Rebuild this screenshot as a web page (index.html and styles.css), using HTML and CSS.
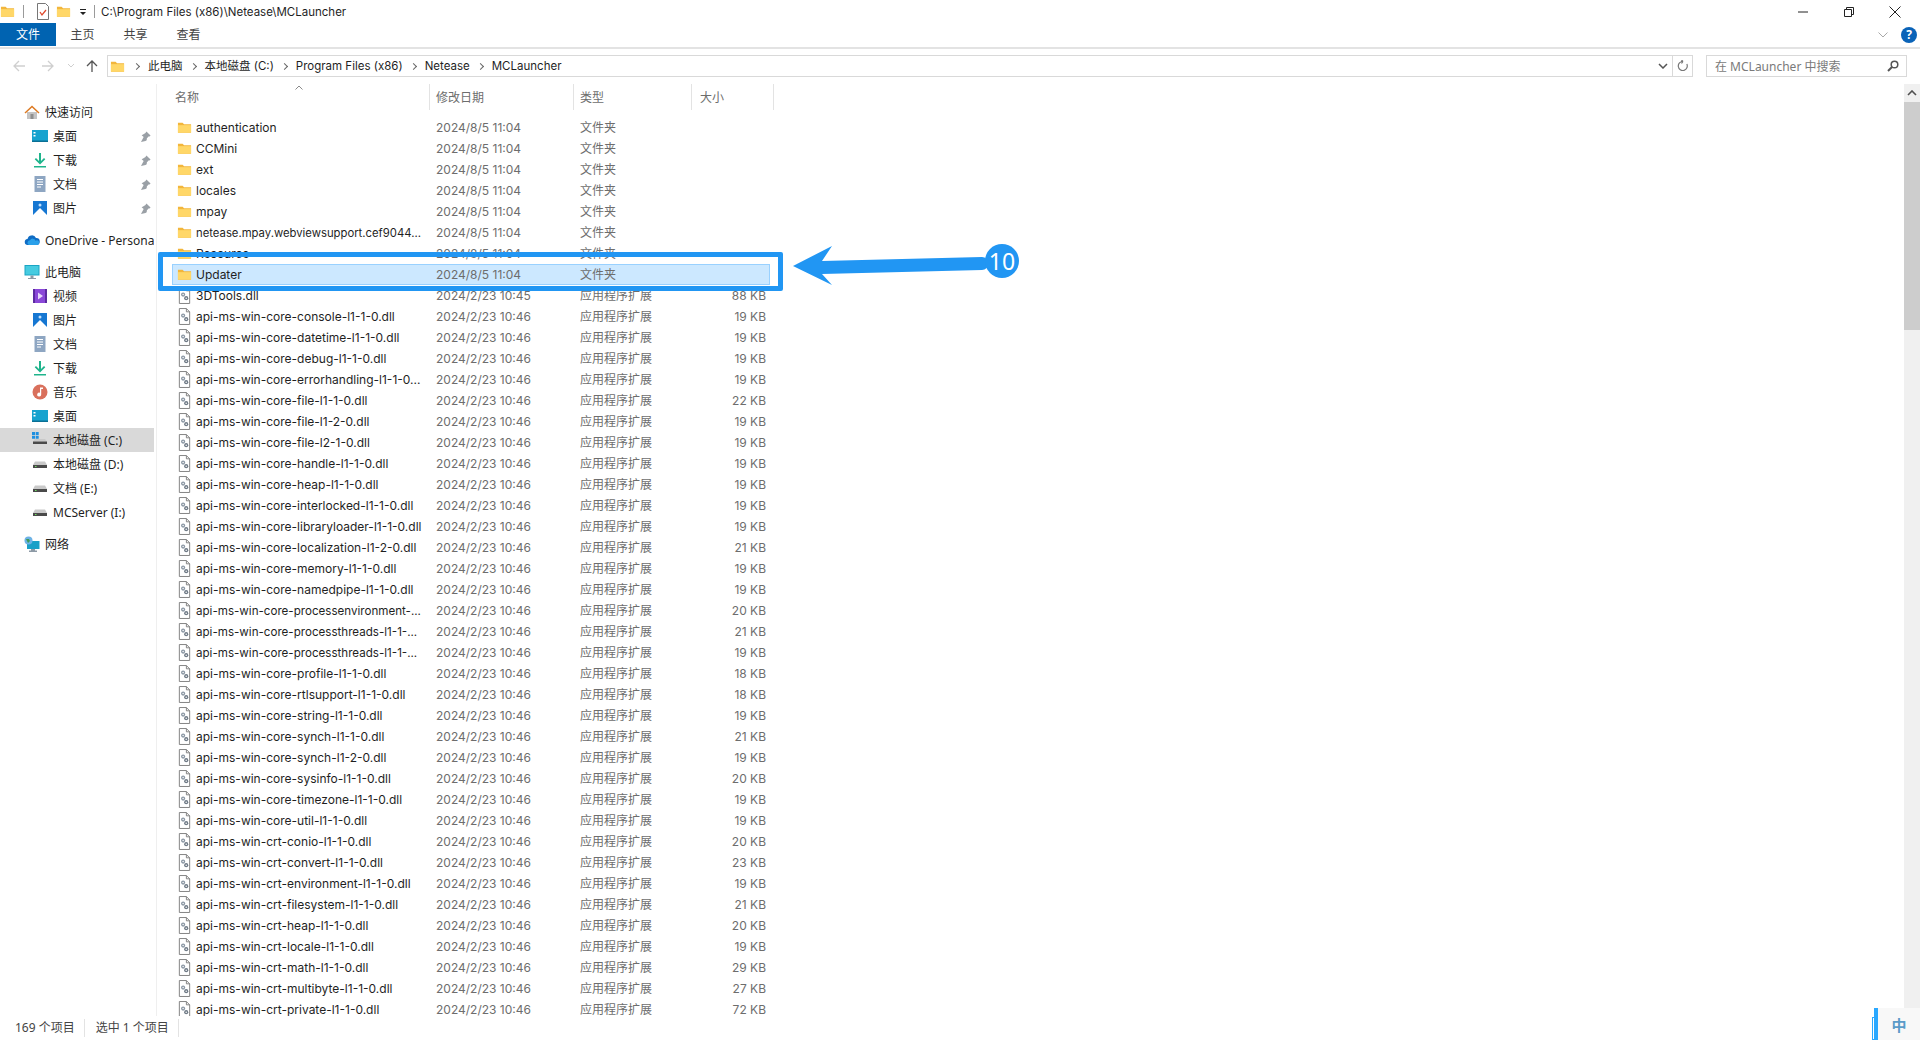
FILE: index.html
```html
<!DOCTYPE html>
<html lang="zh-CN">
<head>
    <meta charset="UTF-8">
    <title>MCLauncher</title>
    <link rel="stylesheet" href="styles.css">
</head>
<body>
    <!-- shared icons -->
    <svg class="defs" width="0" height="0">
        <symbol id="folder" viewBox="0 0 16 16"><path d="M1 3h5l1.500 1.500H15v9H1z" fill="#f2b63c"/><path d="M1 5.500h14v8H1z" fill="#ffd768"/></symbol>
        <symbol id="dll" viewBox="0 0 16 18"><path d="M2.500.5h7.500l3.500 3.500v13.500h-11z" fill="#fff" stroke="#7d7d7d"/><path d="M10 .5v3.500h3.500" fill="none" stroke="#7d7d7d"/><circle cx="6.500" cy="8" r="2.200" fill="#8a96a3"/><circle cx="6.500" cy="8" r=".8" fill="#fff"/><circle cx="9.800" cy="11.800" r="2.200" fill="#6f7a86"/><circle cx="9.800" cy="11.800" r=".8" fill="#fff"/></symbol>
        <symbol id="home" viewBox="0 0 16 16"><path d="M3 8h10v7H3z" fill="#c4c4c4"/><path d="M6.500 10h3v5h-3z" fill="#8f8f8f"/><path d="M.5 8.500 8 1.500l7.500 7-1 1L8 3.500l-6.500 6z" fill="#dd7a22"/></symbol>
        <symbol id="desktop" viewBox="0 0 16 16"><path d="M0 2h16v12H0z" fill="#17a3cf"/><path d="M0 12.500h16V14H0z" fill="#0b6f94"/><path d="M1.500 4h2v1.500h-2zm0 3h2v1.500h-2z" fill="#fff"/></symbol>
        <symbol id="download" viewBox="0 0 16 16"><path d="M7 1h2v8l3-3 1.300 1.300L8 12.500 2.700 7.300 4 6l3 3z" fill="#1fb48c"/><path d="M2 14h12v1.500H2z" fill="#1fb48c"/></symbol>
        <symbol id="doc" viewBox="0 0 16 16"><path d="M2.500 0h11v16h-11z" fill="#8ea6c2"/><path d="M5 3h6v1H5zm0 2.500h6v1H5zm0 2.500h6v1H5zm0 2.500h4v1H5z" fill="#fff"/></symbol>
        <symbol id="pics" viewBox="0 0 16 16"><path d="M1 1h14v14H1z" fill="#1677d2"/><path d="M1 15l7-7 7 7z" fill="#fff"/><circle cx="8" cy="5" r="1.500" fill="#bfe0ff"/></symbol>
        <symbol id="cloud" viewBox="0 0 16 16"><path d="M4 13a3 3 0 0 1-.5-6 4.500 4.500 0 0 1 8.500-1 3.500 3.500 0 0 1 .5 7z" fill="#0f6cc4"/><path d="M5 13a2.500 2.500 0 0 1 1-4.800 3 3 0 0 1 5.500.5 2.200 2.200 0 0 1 3.500 2.300c0 1-.7 2-2 2z" fill="#2aa0ea"/></symbol>
        <symbol id="pc" viewBox="0 0 16 16"><path d="M.5 1h15v10.500H.5z" fill="#1aa5c4"/><path d="M1.500 2h13v8.500h-13z" fill="#46cbe0"/><path d="M6.500 11.500h3V14h-3zM4 14h8v1H4z" fill="#8d9aa6"/></symbol>
        <symbol id="video" viewBox="0 0 16 16"><path d="M1 1h14v14H1z" fill="#8a48d8"/><path d="M1 1h2v14H1zm12 0h2v14h-2z" fill="#5b2aa0"/><path d="M6 4.500 11 8l-5 3.500z" fill="#e6d8fa"/></symbol>
        <symbol id="music" viewBox="0 0 16 16"><circle cx="8" cy="8" r="7.500" fill="#d9705c"/><path d="M8 3.500h3v1.500H9.200v5.500a2 2 0 1 1-1.200-1.800z" fill="#fff"/></symbol>
        <symbol id="drive" viewBox="0 0 16 16"><path d="M3 5.500h10L15 9H1z" fill="#c9c9c9"/><path d="M1 9h14v3H1z" fill="#4a4a4a"/><path d="M3 10h1.500v1H3z" fill="#6fe05f"/></symbol>
        <symbol id="drive-c" viewBox="0 0 16 16"><path d="M3 7h10l2 2.500H1z" fill="#c9c9c9"/><path d="M1 9.500h14V12H1z" fill="#4a4a4a"/><path d="M0 0h3v3H0zm3.700 0h3v3h-3zM0 3.700h3v3H0zm3.700 0h3v3h-3z" fill="#1e8fe0"/></symbol>
        <symbol id="network" viewBox="0 0 16 16"><path d="M3 5h12.500v8H3z" fill="#1aa0c8"/><path d="M7 13h4v1.500h2V16H5v-1.500h2z" fill="#8d9aa6"/><circle cx="4.500" cy="4.500" r="4" fill="#6db2e6"/><path d="M2 3h3l1 2-2 2z" fill="#3f9a57"/></symbol>
        <symbol id="pin" viewBox="0 0 12 12"><path d="M7 .5l4.500 4.500-1 1-.8-.3L7.500 8l-.2 2-1.300.8L1 12l.5-.8L4 6.500 1.800 4.700 3.800 3.500 6 2.300l.3-.8z" fill="#9aa0a6"/></symbol>
    </svg>

    <div class="titlebar">
        <svg class="qa-folder"><use href="#folder"/></svg>
        <span class="qa-sep"></span>
        <svg class="qa-props" viewBox="0 0 12 17"><path d="M.5.5h8l3 3v13H.5z" fill="#fff" stroke="#777"/><path d="M3 9l2 3 4-5" fill="none" stroke="#e0492c" stroke-width="1.300"/></svg>
        <svg class="qa-folder"><use href="#folder"/></svg>
        <svg class="qa-down" viewBox="0 0 8 8"><path d="M1 1h6v1H1zM1 4h6L4 7z" fill="#222"/></svg>
        <span class="qa-sep"></span>
        <span class="title-text">C:\Program Files (x86)\Netease\MCLauncher</span>
        <div class="win-buttons">
            <svg viewBox="0 0 12 12"><path d="M1 6h10" stroke="#222"/></svg>
            <svg viewBox="0 0 12 12"><path d="M1.500 3.500h7v7h-7zM3.500 3.500v-2h7v7h-2" fill="none" stroke="#222"/></svg>
            <svg viewBox="0 0 12 12"><path d="M.5.500l11 11M11.500.500l-11 11" stroke="#222"/></svg>
        </div>
    </div>

    <div class="ribbon">
        <span class="tab tab-file">文件</span>
        <span class="tab">主页</span>
        <span class="tab">共享</span>
        <span class="tab">查看</span>
        <svg class="ribbon-chevron" viewBox="0 0 10 6"><path d="M.5.500 5 5 9.500.500" fill="none" stroke="#a8a8a8"/></svg>
        <span class="help">?</span>
    </div>

    <div class="addressbar">
        <div class="nav-buttons">
            <svg viewBox="0 0 14 14"><path d="M13 7H2M7 2 2 7l5 5" fill="none" stroke="#cfcfcf" stroke-width="1.300"/></svg>
            <svg viewBox="0 0 14 14"><path d="M1 7h11M7 2l5 5-5 5" fill="none" stroke="#cfcfcf" stroke-width="1.300"/></svg>
            <svg class="nav-small" viewBox="0 0 8 6"><path d="M1 1l3 3 3-3" fill="none" stroke="#cfcfcf"/></svg>
            <svg viewBox="0 0 14 14"><path d="M7 13V2M2 7l5-5 5 5" fill="none" stroke="#555" stroke-width="1.300"/></svg>
        </div>
        <div class="path-box">
            <svg class="path-folder"><use href="#folder"/></svg>
            <span class="crumb-sep"></span><span class="crumb">此电脑</span>
            <span class="crumb-sep"></span><span class="crumb">本地磁盘 (C:)</span>
            <span class="crumb-sep"></span><span class="crumb">Program Files (x86)</span>
            <span class="crumb-sep"></span><span class="crumb">Netease</span>
            <span class="crumb-sep"></span><span class="crumb">MCLauncher</span>
            <svg class="path-drop" viewBox="0 0 10 6"><path d="M1 1l4 4 4-4" fill="none" stroke="#555" stroke-width="1.500"/></svg>
            <span class="path-refresh"><svg viewBox="0 0 12 12"><path d="M9.800 4A4.500 4.500 0 1 1 6 1.500H4M6 1.500 4.500 0M6 1.500 4.500 3.500" fill="none" stroke="#777" stroke-width="1.200"/></svg></span>
        </div>
        <div class="search-box">
            <span>在 MCLauncher 中搜索</span>
            <svg viewBox="0 0 12 12"><circle cx="7.500" cy="4.500" r="3.300" fill="none" stroke="#555" stroke-width="1.500"/><path d="M5 7 1 11" stroke="#555" stroke-width="2"/></svg>
        </div>
    </div>

    <div class="main">
        <nav class="sidebar">
            <div class="nav-group">
                <div class="nav-item top"><svg><use href="#home"/></svg>快速访问</div>
                <div class="nav-item"><svg><use href="#desktop"/></svg>桌面<svg class="pin"><use href="#pin"/></svg></div>
                <div class="nav-item"><svg><use href="#download"/></svg>下载<svg class="pin"><use href="#pin"/></svg></div>
                <div class="nav-item"><svg><use href="#doc"/></svg>文档<svg class="pin"><use href="#pin"/></svg></div>
                <div class="nav-item"><svg><use href="#pics"/></svg>图片<svg class="pin"><use href="#pin"/></svg></div>
            </div>
            <div class="nav-group">
                <div class="nav-item top"><svg><use href="#cloud"/></svg>OneDrive - Personal</div>
            </div>
            <div class="nav-group">
                <div class="nav-item top"><svg><use href="#pc"/></svg>此电脑</div>
                <div class="nav-item"><svg><use href="#video"/></svg>视频</div>
                <div class="nav-item"><svg><use href="#pics"/></svg>图片</div>
                <div class="nav-item"><svg><use href="#doc"/></svg>文档</div>
                <div class="nav-item"><svg><use href="#download"/></svg>下载</div>
                <div class="nav-item"><svg><use href="#music"/></svg>音乐</div>
                <div class="nav-item"><svg><use href="#desktop"/></svg>桌面</div>
                <div class="nav-item active"><svg><use href="#drive-c"/></svg>本地磁盘 (C:)</div>
                <div class="nav-item"><svg><use href="#drive"/></svg>本地磁盘 (D:)</div>
                <div class="nav-item"><svg><use href="#drive"/></svg>文档 (E:)</div>
                <div class="nav-item"><svg><use href="#drive"/></svg>MCServer (I:)</div>
            </div>
            <div class="nav-group">
                <div class="nav-item top"><svg><use href="#network"/></svg>网络</div>
            </div>
        </nav>

        <section class="files">
            <div class="list-head">
                <span class="col-name">名称<svg class="sort" viewBox="0 0 8 5"><path d="M.5 4.500 4 1l3.500 3.500" fill="none" stroke="#8a8a8a"/></svg></span>
                <span class="col-date">修改日期</span>
                <span class="col-type">类型</span>
                <span class="col-size">大小</span>
            </div>
            <div class="list-body">
                <div class="row"><svg><use href="#folder"/></svg><span class="name">authentication</span><span class="date">2024/8/5 11:04</span><span class="type">文件夹</span><span class="size"></span></div>
                <div class="row"><svg><use href="#folder"/></svg><span class="name">CCMini</span><span class="date">2024/8/5 11:04</span><span class="type">文件夹</span><span class="size"></span></div>
                <div class="row"><svg><use href="#folder"/></svg><span class="name">ext</span><span class="date">2024/8/5 11:04</span><span class="type">文件夹</span><span class="size"></span></div>
                <div class="row"><svg><use href="#folder"/></svg><span class="name">locales</span><span class="date">2024/8/5 11:04</span><span class="type">文件夹</span><span class="size"></span></div>
                <div class="row"><svg><use href="#folder"/></svg><span class="name">mpay</span><span class="date">2024/8/5 11:04</span><span class="type">文件夹</span><span class="size"></span></div>
                <div class="row"><svg><use href="#folder"/></svg><span class="name narrow">netease.mpay.webviewsupport.cef9044...</span><span class="date">2024/8/5 11:04</span><span class="type">文件夹</span><span class="size"></span></div>
                <div class="row"><svg><use href="#folder"/></svg><span class="name">Resource</span><span class="date">2024/8/5 11:04</span><span class="type">文件夹</span><span class="size"></span></div>
                <div class="row selected"><svg><use href="#folder"/></svg><span class="name">Updater</span><span class="date">2024/8/5 11:04</span><span class="type">文件夹</span><span class="size"></span></div>
                <div class="row"><svg><use href="#dll"/></svg><span class="name">3DTools.dll</span><span class="date">2024/2/23 10:45</span><span class="type">应用程序扩展</span><span class="size">88 KB</span></div>
                <div class="row"><svg><use href="#dll"/></svg><span class="name">api-ms-win-core-console-l1-1-0.dll</span><span class="date">2024/2/23 10:46</span><span class="type">应用程序扩展</span><span class="size">19 KB</span></div>
                <div class="row"><svg><use href="#dll"/></svg><span class="name">api-ms-win-core-datetime-l1-1-0.dll</span><span class="date">2024/2/23 10:46</span><span class="type">应用程序扩展</span><span class="size">19 KB</span></div>
                <div class="row"><svg><use href="#dll"/></svg><span class="name">api-ms-win-core-debug-l1-1-0.dll</span><span class="date">2024/2/23 10:46</span><span class="type">应用程序扩展</span><span class="size">19 KB</span></div>
                <div class="row"><svg><use href="#dll"/></svg><span class="name">api-ms-win-core-errorhandling-l1-1-0...</span><span class="date">2024/2/23 10:46</span><span class="type">应用程序扩展</span><span class="size">19 KB</span></div>
                <div class="row"><svg><use href="#dll"/></svg><span class="name">api-ms-win-core-file-l1-1-0.dll</span><span class="date">2024/2/23 10:46</span><span class="type">应用程序扩展</span><span class="size">22 KB</span></div>
                <div class="row"><svg><use href="#dll"/></svg><span class="name">api-ms-win-core-file-l1-2-0.dll</span><span class="date">2024/2/23 10:46</span><span class="type">应用程序扩展</span><span class="size">19 KB</span></div>
                <div class="row"><svg><use href="#dll"/></svg><span class="name">api-ms-win-core-file-l2-1-0.dll</span><span class="date">2024/2/23 10:46</span><span class="type">应用程序扩展</span><span class="size">19 KB</span></div>
                <div class="row"><svg><use href="#dll"/></svg><span class="name">api-ms-win-core-handle-l1-1-0.dll</span><span class="date">2024/2/23 10:46</span><span class="type">应用程序扩展</span><span class="size">19 KB</span></div>
                <div class="row"><svg><use href="#dll"/></svg><span class="name">api-ms-win-core-heap-l1-1-0.dll</span><span class="date">2024/2/23 10:46</span><span class="type">应用程序扩展</span><span class="size">19 KB</span></div>
                <div class="row"><svg><use href="#dll"/></svg><span class="name">api-ms-win-core-interlocked-l1-1-0.dll</span><span class="date">2024/2/23 10:46</span><span class="type">应用程序扩展</span><span class="size">19 KB</span></div>
                <div class="row"><svg><use href="#dll"/></svg><span class="name">api-ms-win-core-libraryloader-l1-1-0.dll</span><span class="date">2024/2/23 10:46</span><span class="type">应用程序扩展</span><span class="size">19 KB</span></div>
                <div class="row"><svg><use href="#dll"/></svg><span class="name">api-ms-win-core-localization-l1-2-0.dll</span><span class="date">2024/2/23 10:46</span><span class="type">应用程序扩展</span><span class="size">21 KB</span></div>
                <div class="row"><svg><use href="#dll"/></svg><span class="name">api-ms-win-core-memory-l1-1-0.dll</span><span class="date">2024/2/23 10:46</span><span class="type">应用程序扩展</span><span class="size">19 KB</span></div>
                <div class="row"><svg><use href="#dll"/></svg><span class="name">api-ms-win-core-namedpipe-l1-1-0.dll</span><span class="date">2024/2/23 10:46</span><span class="type">应用程序扩展</span><span class="size">19 KB</span></div>
                <div class="row"><svg><use href="#dll"/></svg><span class="name less">api-ms-win-core-processenvironment-...</span><span class="date">2024/2/23 10:46</span><span class="type">应用程序扩展</span><span class="size">20 KB</span></div>
                <div class="row"><svg><use href="#dll"/></svg><span class="name less">api-ms-win-core-processthreads-l1-1-...</span><span class="date">2024/2/23 10:46</span><span class="type">应用程序扩展</span><span class="size">21 KB</span></div>
                <div class="row"><svg><use href="#dll"/></svg><span class="name less">api-ms-win-core-processthreads-l1-1-...</span><span class="date">2024/2/23 10:46</span><span class="type">应用程序扩展</span><span class="size">19 KB</span></div>
                <div class="row"><svg><use href="#dll"/></svg><span class="name">api-ms-win-core-profile-l1-1-0.dll</span><span class="date">2024/2/23 10:46</span><span class="type">应用程序扩展</span><span class="size">18 KB</span></div>
                <div class="row"><svg><use href="#dll"/></svg><span class="name">api-ms-win-core-rtlsupport-l1-1-0.dll</span><span class="date">2024/2/23 10:46</span><span class="type">应用程序扩展</span><span class="size">18 KB</span></div>
                <div class="row"><svg><use href="#dll"/></svg><span class="name">api-ms-win-core-string-l1-1-0.dll</span><span class="date">2024/2/23 10:46</span><span class="type">应用程序扩展</span><span class="size">19 KB</span></div>
                <div class="row"><svg><use href="#dll"/></svg><span class="name">api-ms-win-core-synch-l1-1-0.dll</span><span class="date">2024/2/23 10:46</span><span class="type">应用程序扩展</span><span class="size">21 KB</span></div>
                <div class="row"><svg><use href="#dll"/></svg><span class="name">api-ms-win-core-synch-l1-2-0.dll</span><span class="date">2024/2/23 10:46</span><span class="type">应用程序扩展</span><span class="size">19 KB</span></div>
                <div class="row"><svg><use href="#dll"/></svg><span class="name">api-ms-win-core-sysinfo-l1-1-0.dll</span><span class="date">2024/2/23 10:46</span><span class="type">应用程序扩展</span><span class="size">20 KB</span></div>
                <div class="row"><svg><use href="#dll"/></svg><span class="name">api-ms-win-core-timezone-l1-1-0.dll</span><span class="date">2024/2/23 10:46</span><span class="type">应用程序扩展</span><span class="size">19 KB</span></div>
                <div class="row"><svg><use href="#dll"/></svg><span class="name">api-ms-win-core-util-l1-1-0.dll</span><span class="date">2024/2/23 10:46</span><span class="type">应用程序扩展</span><span class="size">19 KB</span></div>
                <div class="row"><svg><use href="#dll"/></svg><span class="name">api-ms-win-crt-conio-l1-1-0.dll</span><span class="date">2024/2/23 10:46</span><span class="type">应用程序扩展</span><span class="size">20 KB</span></div>
                <div class="row"><svg><use href="#dll"/></svg><span class="name">api-ms-win-crt-convert-l1-1-0.dll</span><span class="date">2024/2/23 10:46</span><span class="type">应用程序扩展</span><span class="size">23 KB</span></div>
                <div class="row"><svg><use href="#dll"/></svg><span class="name">api-ms-win-crt-environment-l1-1-0.dll</span><span class="date">2024/2/23 10:46</span><span class="type">应用程序扩展</span><span class="size">19 KB</span></div>
                <div class="row"><svg><use href="#dll"/></svg><span class="name">api-ms-win-crt-filesystem-l1-1-0.dll</span><span class="date">2024/2/23 10:46</span><span class="type">应用程序扩展</span><span class="size">21 KB</span></div>
                <div class="row"><svg><use href="#dll"/></svg><span class="name">api-ms-win-crt-heap-l1-1-0.dll</span><span class="date">2024/2/23 10:46</span><span class="type">应用程序扩展</span><span class="size">20 KB</span></div>
                <div class="row"><svg><use href="#dll"/></svg><span class="name">api-ms-win-crt-locale-l1-1-0.dll</span><span class="date">2024/2/23 10:46</span><span class="type">应用程序扩展</span><span class="size">19 KB</span></div>
                <div class="row"><svg><use href="#dll"/></svg><span class="name">api-ms-win-crt-math-l1-1-0.dll</span><span class="date">2024/2/23 10:46</span><span class="type">应用程序扩展</span><span class="size">29 KB</span></div>
                <div class="row"><svg><use href="#dll"/></svg><span class="name">api-ms-win-crt-multibyte-l1-1-0.dll</span><span class="date">2024/2/23 10:46</span><span class="type">应用程序扩展</span><span class="size">27 KB</span></div>
                <div class="row"><svg><use href="#dll"/></svg><span class="name">api-ms-win-crt-private-l1-1-0.dll</span><span class="date">2024/2/23 10:46</span><span class="type">应用程序扩展</span><span class="size">72 KB</span></div>
            </div>
        </section>

        <div class="scrollbar">
            <svg class="scroll-up" viewBox="0 0 10 6"><path d="M1 5l4-4 4 4" fill="none" stroke="#505050" stroke-width="1.600"/></svg>
            <div class="scroll-thumb"></div>
        </div>
    </div>

    <div class="statusbar">
        <span class="status-cell first">169 个项目</span>
        <span class="status-cell">选中 1 个项目</span>
    </div>

    <!-- things lying over the window -->
    <div class="mark-box"></div>
    <svg class="mark-arrow" viewBox="0 0 210 50"><path d="M1 23 40 3 30 18 190 14a6.500 6.500 0 0 1 0 13L30 31 40 42z" fill="#2196f3"/></svg>
    <div class="mark-badge">10</div>
    <div class="ime"><span>中</span></div>
</body>
</html>
```

FILE: styles.css
```css
:root {
    --text: #1f1f1f;
    --muted: #6d6d6d;
    --line: #e3e3e3;
    --mark: #2196f3;
}

* {
    box-sizing: border-box;
}

html, body {
    height: 100%;
}

body {
    margin: 0;
    height: 1040px;
    overflow: hidden;
    display: flex;
    flex-direction: column;
    background-color: #fff;
    color: var(--text);
    font-family: "Noto Sans", "Noto Sans CJK SC", sans-serif;
    font-size: 12px;
    position: relative;
}

.defs {
    position: absolute;
}

/* title bar */
.titlebar {
    height: 23px;
    display: flex;
    align-items: center;
    flex: none;
}

.qa-folder {
    width: 15px;
    height: 15px;
}

.qa-sep {
    width: 1px;
    height: 13px;
    background-color: #9a9a9a;
    margin: 0 9px 0 8px;
}

.qa-props {
    width: 12px;
    height: 17px;
    margin: 0 7px 0 4px;
}

.qa-down {
    width: 8px;
    height: 8px;
    margin: 1px 0 0 8px;
}

.titlebar .qa-sep:nth-of-type(n+2) {
    margin: 0 6px 0 7px;
}

.title-text {
    font-family: Inter, "Noto Sans CJK SC", sans-serif;
    font-size: 11.5px;
}

.win-buttons {
    margin-left: auto;
    margin-right: 19px;
    display: flex;
    gap: 34px;
}

.win-buttons svg {
    width: 12px;
    height: 12px;
}

/* ribbon */
.ribbon {
    height: 26px;
    flex: none;
    display: flex;
    align-items: flex-start;
    border-bottom: 2px solid var(--line);
}

.tab {
    width: 53px;
    height: 23px;
    line-height: 24px;
    text-align: center;
    color: #444;
}

.tab-file {
    width: 56px;
    background-color: #0063b1;
    color: #fff;
}

.ribbon-chevron {
    width: 10px;
    height: 6px;
    margin: 9px 0 0 auto;
}

.help {
    width: 16px;
    height: 16px;
    margin: 4px 3px 0 13px;
    border-radius: 50%;
    background-color: #0a63b8;
    color: #fff;
    font-weight: 700;
    line-height: 16px;
    text-align: center;
}

/* address bar */
.addressbar {
    height: 35px;
    flex: none;
    display: flex;
    align-items: center;
    padding: 0 13px 1px 0;
}

.nav-buttons {
    width: 107px;
    flex: none;
    display: flex;
    align-items: center;
    padding-left: 12px;
}

.nav-buttons svg {
    width: 14px;
    height: 14px;
    flex: none;
    margin-right: 15px;
}

.nav-buttons .nav-small {
    width: 8px;
    height: 6px;
    margin: 0 10px 0 -3px;
}

.path-box {
    width: 1586px;
    height: 22px;
    border: 1px solid #d9d9d9;
    display: flex;
    align-items: center;
    padding-left: 2px;
    font-family: Inter, "Noto Sans CJK SC", sans-serif;
    font-size: 11.5px;
}

.path-folder {
    width: 15px;
    height: 15px;
    margin-right: 1px;
}

.crumb-sep {
    width: 5px;
    height: 5px;
    border-top: 1px solid #666;
    border-right: 1px solid #666;
    transform: rotate(45deg);
    margin: 0 9px 0 8px;
}

.crumb {
    line-height: 20px;
}

.path-drop {
    width: 10px;
    height: 6px;
    margin-left: auto;
    margin-right: 4px;
}

.path-refresh {
    width: 20px;
    height: 20px;
    border-left: 1px solid #d9d9d9;
    display: flex;
    align-items: center;
    justify-content: center;
}

.path-refresh svg {
    width: 12px;
    height: 12px;
}

.search-box {
    width: 201px;
    height: 22px;
    margin-left: 13px;
    border: 1px solid #d9d9d9;
    display: flex;
    align-items: center;
    justify-content: space-between;
    padding: 0 7px 0 8px;
    color: #7a7a7a;
}

.search-box svg {
    width: 12px;
    height: 12px;
}

/* main area */
.main {
    flex: 1;
    min-height: 0;
    display: flex;
}

.sidebar {
    width: 157px;
    flex: none;
    padding-top: 16px;
    border-right: 1px solid #efefef;
    overflow: hidden;
}

.nav-group + .nav-group {
    margin-top: 8px;
}

.nav-item {
    width: 154px;
    height: 24px;
    display: flex;
    align-items: center;
    padding-left: 32px;
    white-space: nowrap;
    overflow: hidden;
    position: relative;
}

.nav-item svg {
    width: 16px;
    height: 16px;
    margin-right: 5px;
    flex: none;
}

.nav-item.top {
    padding-left: 24px;
}

.nav-item.active {
    background-color: #d9d9d9;
}

.nav-item .pin {
    position: absolute;
    right: 3px;
    width: 11px;
    height: 11px;
    margin: 0;
}

/* file list */
.files {
    flex: 1;
    min-width: 0;
    overflow: hidden;
    font-family: Inter, "Noto Sans CJK SC", sans-serif;
}

.list-head {
    height: 33px;
    display: flex;
    align-items: flex-start;
    color: var(--muted);
}

.list-head span {
    height: 26px;
    line-height: 27px;
    border-right: 1px solid var(--line);
    padding-left: 6px;
    position: relative;
}

.col-name {
    width: 273px;
    padding-left: 18px !important;
}

.col-date {
    width: 144px;
}

.col-type {
    width: 118px;
}

.list-head .col-size {
    width: 82px;
    padding-left: 8px;
}

.sort {
    position: absolute;
    left: 138px;
    top: 1px;
    width: 8px;
    height: 5px;
}

.list-body {
    padding-left: 15px;
}

.row {
    width: 598px;
    height: 21px;
    display: grid;
    grid-template-columns: 23px 240px 144px 111px 78px;
    align-items: center;
    line-height: 14px;
    border: 1px solid transparent;
    white-space: nowrap;
}

.row svg {
    width: 15px;
    height: 17px;
    margin-left: 4px;
}

.row.selected {
    background-color: #cce8ff;
    border-color: #99d1ff;
}

/* long names that reach the column's end */
.narrow {
    font-size: 11.3px;
}

.less {
    font-size: 11.6px;
}

.date, .type, .size {
    color: var(--muted);
}

.size {
    text-align: right;
    padding-right: 3px;
}

.scrollbar {
    width: 16px;
    flex: none;
    margin-left: auto;
    background-color: #f0f0f0;
    position: relative;
}

.scroll-up {
    display: block;
    width: 10px;
    height: 6px;
    margin: 6px auto;
}

.scroll-thumb {
    height: 228px;
    background-color: #cdcdcd;
}

/* status bar */
.statusbar {
    height: 24px;
    flex: none;
    display: flex;
    align-items: center;
    color: #444;
}

.status-cell {
    padding: 0 9px 0 11px;
    border-right: 1px solid var(--line);
    line-height: 18px;
}

.status-cell.first {
    padding-left: 15px;
}

/* annotation and IME */
.mark-box {
    position: absolute;
    left: 158px;
    top: 252px;
    width: 625px;
    height: 39px;
    border: 5px solid var(--mark);
    border-radius: 2px;
}

.mark-arrow {
    position: absolute;
    left: 792px;
    top: 243px;
    width: 210px;
    height: 50px;
}

.mark-badge {
    position: absolute;
    left: 985px;
    top: 244px;
    width: 34px;
    height: 34px;
    border-radius: 50%;
    background-color: var(--mark);
    color: #fff;
    font-size: 23px;
    line-height: 34px;
    text-align: center;
}

.ime {
    position: absolute;
    right: 0;
    bottom: 0;
    width: 46px;
    height: 32px;
    background-color: #f8f8f8;
    border-left: 4px solid #29a8ff;
    display: flex;
    align-items: center;
    justify-content: center;
    color: #5b9bc8;
    font-size: 15px;
    font-weight: 700;
}

.ime::before {
    content: '';
    position: absolute;
    left: -6px;
    top: 9px;
    bottom: 0;
    width: 2px;
    border: 1px solid #29a8ff;
}
```
